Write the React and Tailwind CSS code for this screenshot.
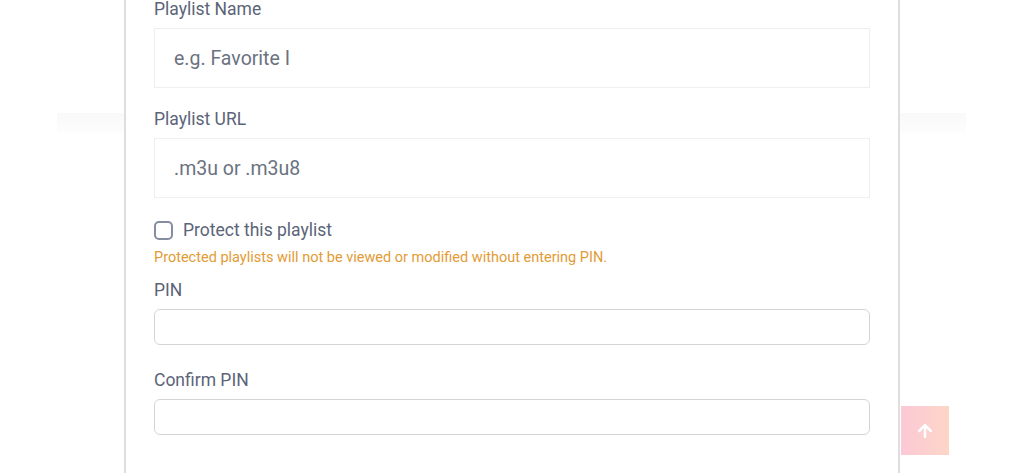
import { ArrowUp } from "lucide-react";

function Label({ children, className = "" }) {
  return <label className={`block text-[17.5px] leading-[18px] text-[#5b6478] ${className}`}>{children}</label>;
}

export default function App() {
  return (
    <div className="relative w-[1024px] h-[473px] overflow-hidden bg-white font-['Roboto',sans-serif]">
      {/* faint card edge behind the modal */}
      <div className="absolute left-[57px] top-[113px] w-[909px] h-[20px] bg-gradient-to-b from-[#f9f9f9] to-[#fdfdfd]" />

      <div className="relative z-10 mx-auto w-[776px] h-[473px] bg-white border-x-2 border-[#dedede] px-[28px]">
        <Label className="mb-[10px]">Playlist Name</Label>
        <input
          type="text"
          placeholder="e.g. Favorite I"
          className="block w-full h-[60px] border border-[#efefef] px-[19px] text-[19.5px] text-[#4b5563] placeholder:text-[#6b7280] outline-none"
        />

        <Label className="mt-[22px] mb-[10px]">Playlist URL</Label>
        <input
          type="text"
          placeholder=".m3u or .m3u8"
          className="block w-full h-[60px] border border-[#efefef] px-[19px] text-[19.5px] text-[#4b5563] placeholder:text-[#6b7280] outline-none"
        />

        <div className="mt-[22px] flex items-center gap-[10px]">
          <span className="block w-[19px] h-[19px] rounded-[5px] border-2 border-[#858da0]" />
          <span className="text-[17.5px] leading-[20px] text-[#5b6478]">Protect this playlist</span>
        </div>
        <p className="mt-[10px] text-[14.5px] leading-[16px] text-[#e39b35]">
          Protected playlists will not be viewed or modified without entering PIN.
        </p>

        <Label className="mt-[15px] mb-[10px]">PIN</Label>
        <input
          type="password"
          className="block w-full h-[36px] rounded-[6px] border border-[#d4d4d4] px-3 outline-none"
        />

        <Label className="mt-[26px] mb-[10px]">Confirm PIN</Label>
        <input
          type="password"
          className="block w-full h-[36px] rounded-[6px] border border-[#d4d4d4] px-3 outline-none"
        />
      </div>

      <button className="absolute left-[901px] top-[406px] w-[48px] h-[49px] flex items-center justify-center bg-gradient-to-r from-[#fcc8d6] to-[#fdd6c7] text-white">
        <ArrowUp size={20} strokeWidth={3} />
      </button>
    </div>
  );
}
